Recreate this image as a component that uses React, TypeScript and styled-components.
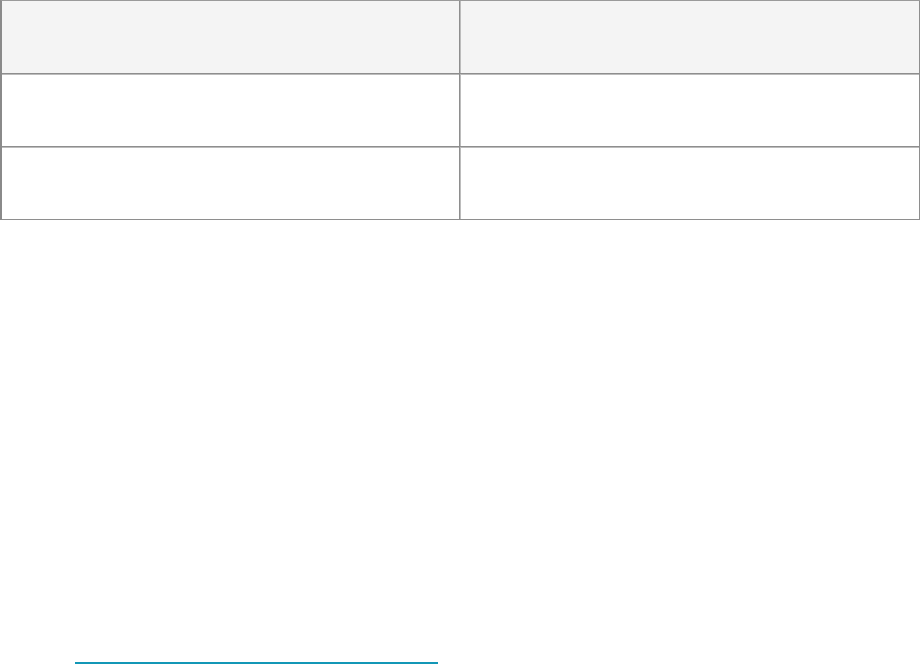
import styled, { createGlobalStyle } from 'styled-components';

const GlobalStyle = createGlobalStyle`
  html, body {
    margin: 0;
    padding: 0;
    background: #ffffff;
    font-family: 'Open Sans', 'Liberation Sans', sans-serif;
  }
`;

const Page = styled.div`
  width: 921px;
  height: 665px;
  overflow: hidden;
  display: flex;
  flex-direction: column;
`;

const Table = styled.table`
  width: 920px;
  border-collapse: separate;
  border-spacing: 0;
  border-top: 1px solid #9a9a9a;
  border-left: 2px solid #8a8a8a;
  table-layout: fixed;
`;

const Cell = styled.td<{ $head?: boolean; $last?: boolean }>`
  height: 73px;
  padding: 0;
  box-sizing: border-box;
  background: ${({ $head }) => ($head ? '#f4f4f4' : '#ffffff')};
  border-bottom: 1px solid #8e8e8e;
  border-right: 1px solid #8e8e8e;
  box-shadow: inset 0 1px 0 ${({ $head }) => ($head ? 'transparent' : '#bcbcbc')},
    inset ${({ $last }) => ($last ? '1px 0 0 #bcbcbc' : '0 0 0 transparent')};
`;

const Footer = styled.div`
  margin-top: auto;
  padding: 0 0 1px 75px;
`;

const UnderLink = styled.a`
  display: block;
  width: 363px;
  height: 0;
  border-top: 2px solid #1397b6;
`;

const rows = [true, false, false];

export default function App() {
  return (
    <Page>
      <GlobalStyle />
      <Table>
        <tbody>
          {rows.map((head, i) => (
            <tr key={i}>
              <Cell $head={head} style={{ width: 458 }} />
              <Cell $head={head} $last />
            </tr>
          ))}
        </tbody>
      </Table>
      <Footer>
        <UnderLink href="#" aria-label="link" />
      </Footer>
    </Page>
  );
}
